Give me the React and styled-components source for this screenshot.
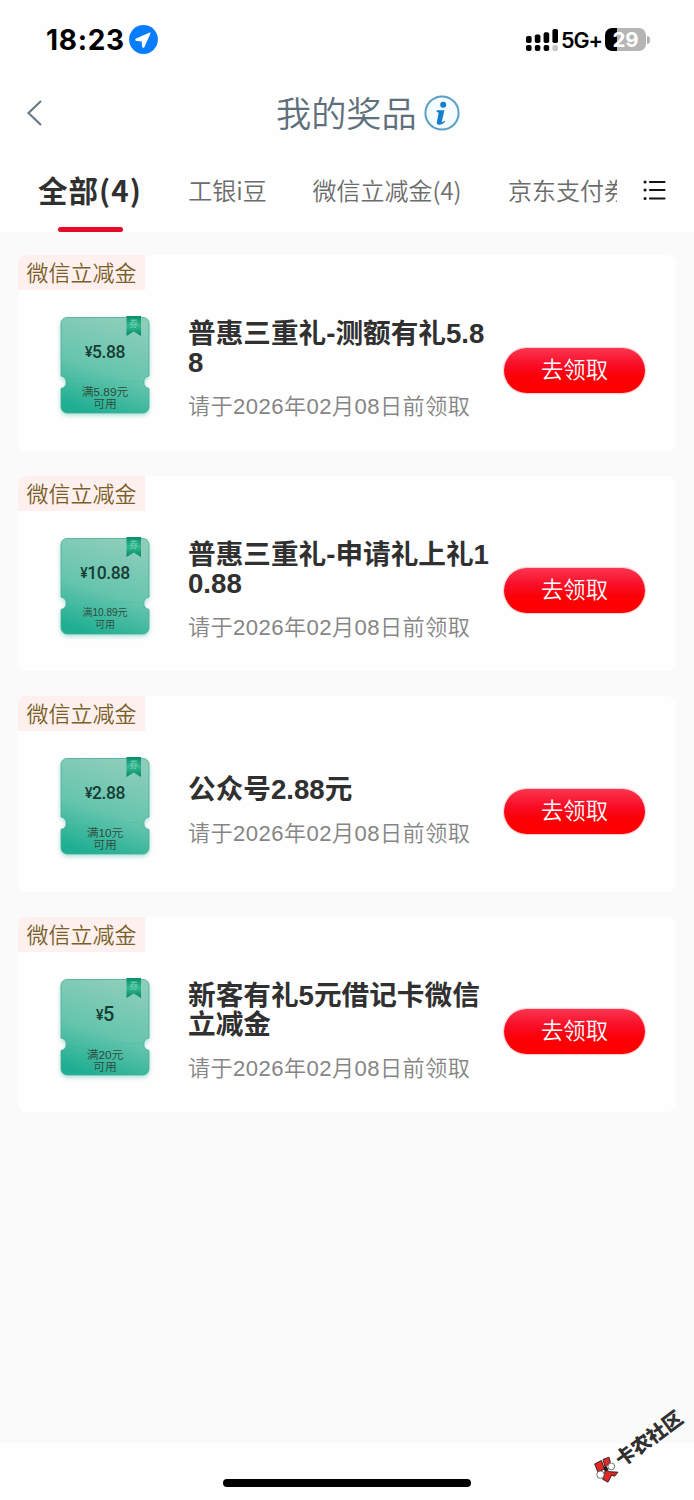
import React from 'react'
import styled, { createGlobalStyle } from 'styled-components'

const palette = {
  title: '#5d707b',
  text: '#303030',
  muted: '#858585',
  red: '#e60a26',
  page: '#fafafa',
}

const sans = "'Liberation Sans', 'Noto Sans CJK SC', sans-serif"
const cjk = "'Noto Sans CJK SC', sans-serif"

const GlobalStyle = createGlobalStyle`
  * {
    box-sizing: border-box;
  }
  body {
    margin: 0;
    background: #fff;
    font-family: ${sans};
  }
`

const Screen = styled.div`
  position: relative;
  width: 694px;
  height: 1500px;
  display: flex;
  flex-direction: column;
  overflow: hidden;
  background: #fefefe;
`

const StatusBar = styled.div`
  height: 79px;
  padding: 0 44px 0 46px;
  display: flex;
  align-items: center;
  justify-content: space-between;
  color: #000;
`

const StatusGroup = styled.div`
  display: flex;
  align-items: center;
`

const Clock = styled.span`
  width: 83px;
  font: 700 28px/40px Inter, sans-serif;
  letter-spacing: 0.7px;
  white-space: nowrap;
`

const Network = styled.span`
  width: 44px;
  margin-left: 3px;
  font: 600 21.5px/40px Inter, sans-serif;
  letter-spacing: -1.1px;
  white-space: nowrap;
`

const Battery = styled.div`
  width: 41px;
  height: 23px;
  border-radius: 7px;
  background: linear-gradient(90deg, #000 12px, #b5b5b5 12px);
  color: #fff;
  font: 700 20.5px/24px Inter, sans-serif;
  text-align: center;
`

const BatteryTip = styled.div`
  width: 3px;
  height: 8px;
  margin-left: 1px;
  border-radius: 0 3px 3px 0;
  background: #b5b5b5;
`

const Header = styled.header`
  height: 68px;
  padding: 0 26px;
  display: grid;
  grid-template-columns: 20px 1fr 20px;
  align-items: center;
`

const Heading = styled.div`
  display: flex;
  align-items: center;
  padding-left: 230px;
  color: ${palette.title};

  h1 {
    width: 141px;
    margin: -3px 0 0;
    font: 350 35.2px/50px ${cjk};
    white-space: nowrap;
  }
  svg {
    margin-left: 7px;
  }
`

const TabBar = styled.nav`
  height: 85px;
  display: flex;
  background: #fefefe;
`

const TabScroller = styled.div`
  width: 617px;
  padding-left: 38px;
  display: flex;
  overflow: hidden;
`

const Tab = styled.div`
  flex: none;
  display: flex;
  flex-direction: column;
  align-items: center;
  width: ${props => props.width}px;
  margin-right: ${props => props.gap}px;
  color: ${props => (props.active ? palette.text : '#6c6c6c')};
  font: ${props => (props.active ? '700 29.5px' : '350 24px')} / 40px ${cjk};
  letter-spacing: ${props => (props.active ? 1.1 : 0)}px;
  padding-top: ${props => (props.active ? 22 : 23)}px;
  white-space: nowrap;

  &::after {
    content: '';
    display: ${props => (props.active ? 'block' : 'none')};
    width: 65px;
    height: 5px;
    margin-top: 18px;
    border-radius: 3px;
    background: ${palette.red};
  }
`

const TabMenu = styled.div`
  padding: 33px 0 0 26px;
`

const List = styled.main`
  height: 1211px;
  padding: 23px 18px 0;
  display: flex;
  flex-direction: column;
  gap: 25px;
  background: ${palette.page};
`

const Card = styled.section`
  height: 195.5px;
  border-radius: 8px;
  background: #fefefe;
`

const Tag = styled.div`
  width: 127px;
  height: 35px;
  border-radius: 8px 0 0 0;
  background: #fff0f0;
  color: #796027;
  text-align: center;
  font: 350 22px/33px ${cjk};
`

const CardBody = styled.div`
  height: 148px;
  padding: 0 31px 0 36px;
  display: flex;
  align-items: center;
`

const Ticket = styled.div`
  position: relative;
  width: 102px;
  height: 112px;
  align-self: flex-start;
  margin-top: 21px;
`

const TicketFace = styled.div`
  position: absolute;
  top: 0;
  left: 0;
  width: 100%;
  text-align: center;
  color: #173d35;
  white-space: nowrap;
`

const Amount = styled.div`
  padding-top: 29px;
  font: 500 ${props => (props.large ? 20 : 17.5)}px/24px Roboto, sans-serif;
  letter-spacing: -0.4px;

  small {
    font-size: 14px;
    vertical-align: 1px;
  }
`

const Condition = styled.div`
  margin-top: 22px;
  font: 350 ${props => (props.small ? 10 : 11.8)}px/12px 'Liberation Sans', ${cjk};
  color: #2f4b3c;
`

const Info = styled.div`
  width: 348px;
  flex: none;
  margin-top: 14px;
  padding-left: 32px;
`

const Name = styled.h2`
  width: 306px;
  margin: 0;
  color: ${palette.text};
  font: 700 27.65px/29px ${sans};
  word-break: break-all;
`

const Deadline = styled.p`
  margin: 14px 0 0;
  color: ${palette.muted};
  font: 350 22.1px/32px ${sans};
  letter-spacing: 0.45px;
  white-space: nowrap;
`

const ClaimButton = styled.button`
  width: 141px;
  height: 45px;
  margin-top: 12px;
  padding: 0 0 4px;
  border: 0;
  border-radius: 23px;
  background: linear-gradient(#fb3550 0%, #f90d26 38%, #fb0005 65%, #ff0000 100%);
  box-shadow: 0 0 1px 1px #ffc8ca;
  color: #fff;
  font: 350 22.3px/41px ${cjk};
`

const HomeArea = styled.footer`
  flex: 1;
  display: flex;
  justify-content: center;
  padding-top: 36px;
`

const HomeIndicator = styled.div`
  width: 248px;
  height: 8px;
  border-radius: 4px;
  background: #000;
`

// community stamp lying over the bottom right corner
const Watermark = styled.div`
  position: absolute;
  left: 585px;
  top: 1431px;
  display: flex;
  align-items: center;
  transform: rotate(-36.5deg);
  color: #303030;
  font: 900 19.5px/30px ${cjk};
  white-space: nowrap;

  svg {
    transform: rotate(36.5deg);
  }
`

const prizes = [
  { name: '普惠三重礼-测额有礼5.88', amount: '5.88', limit: '5.89' },
  { name: '普惠三重礼-申请礼上礼10.88', amount: '10.88', limit: '10.89' },
  { name: '公众号2.88元', amount: '2.88', limit: '10' },
  { name: '新客有礼5元借记卡微信立减金', amount: '5', limit: '20' },
]

const LocationIcon = () => (
  <svg width="29" height="29" viewBox="0 0 29 29">
    <circle cx="14.5" cy="14.5" r="14.4" fill="#087cff" />
    <path d="M21 8 7.4 14.1c-.8.4-.6 1.1.2 1.2l5.6.5.5 5.8c.1.8.9.9 1.2.2L21 8Z" fill="#fff" stroke="#fff" strokeWidth="1.2" strokeLinejoin="round" />
  </svg>
)

const SignalIcon = () => (
  <svg width="32" height="24" viewBox="0 0 32 24">
    {[8, 6.5, 4.2, 1].map((y, i) => (
      <rect key={y} x={i * 8.8} y={y} width="5.6" height={15 - y} rx="1.8" />
    ))}
    {[0, 1, 2, 3].map(i => (
      <rect key={i} x={i * 8.8} y="17" width="5.6" height="6" rx="2" fill={i === 3 ? '#c5c5c5' : '#000'} />
    ))}
  </svg>
)

const BackIcon = () => (
  <svg width="17" height="28" viewBox="0 0 17 28" fill="none" stroke="#647b81" strokeWidth="2.1">
    <path d="M15 2 2.5 14 15 26" />
  </svg>
)

const InfoIcon = () => (
  <svg width="36" height="36" viewBox="0 0 36 36">
    <circle cx="18" cy="18" r="16.6" fill="#f4fcff" stroke="#5a9fc6" strokeWidth="2" />
    <circle cx="19.2" cy="9.7" r="3" fill="#147dcc" />
    <path d="M12.8 15.2h7.6l-2.6 11.2c-.2 1 .6 1 2.6-.6l.6 1c-2.2 2.3-4 3.3-6.1 3-2-.3-2.3-1.7-1.9-3.6l1.7-8.5-2.1-.9.2-1.6Z" fill="#147dcc" />
  </svg>
)

const MenuIcon = () => (
  <svg width="24" height="22" viewBox="0 0 24 22" fill="none" stroke="#151515" strokeWidth="2.2" strokeLinecap="round">
    <path d="M7 2h14.5M7 10h14.5M7 18.5h14.5" />
    <path d="M2 2h.1M2 10h.1M2 18.5h.1" strokeWidth="3" />
  </svg>
)

const TicketShape = ({ id }) => (
  <svg width="102" height="112" viewBox="0 0 102 112">
    <defs>
      <linearGradient id={`face${id}`} x1=".65" y1="0" x2=".35" y2="1">
        <stop offset="0" stopColor="#8dcdbb" />
        <stop offset=".55" stopColor="#66c5ad" />
        <stop offset="1" stopColor="#1fae92" />
      </linearGradient>
      <linearGradient id={`flag${id}`} x1="0" y1="0" x2="0" y2="1">
        <stop offset="0" stopColor="#078e68" />
        <stop offset=".5" stopColor="#35b891" />
        <stop offset="1" stopColor="#00885f" />
      </linearGradient>
    </defs>
    <path
      d="M13 6.5h76a6 6 0 0 1 6 6V65a6.3 6.3 0 0 0 0 12.4V96a6 6 0 0 1-6 6H13a6 6 0 0 1-6-6V77.4A6.3 6.3 0 0 0 7 65V12.5a6 6 0 0 1 6-6Z"
      fill={`url(#face${id})`}
      stroke="#4aa994"
      strokeWidth=".8"
      style={{ filter: 'drop-shadow(0 2px 2px #a7dfd5)' }}
    />
    <path d="M14 70.5h74" stroke="#52bfa7" strokeWidth=".7" />
    <path d="M72.5 5H87v20l-7.2-4.4-7.3 4.4V5Z" fill={`url(#flag${id})`} />
    <text x="79.8" y="16" textAnchor="middle" fontSize="9" fill="#79d5b6" fontFamily="Noto Sans CJK SC, sans-serif">券</text>
  </svg>
)

const StampLogo = () => (
  <svg width="27" height="28" viewBox="0 0 27 28">
    <g stroke="#241716" strokeWidth=".9" fill="#e12a28" strokeLinejoin="round">
      <path d="m2 8.7 6.7-3.4 3.3 8.4-6.7 3.3Z" />
      <path d="m10.3 4.3 6-2.3 1.4 5-5.2 5Z" />
      <path d="m12.5 15 4.5 1.5 8.3.5-3.3 4-3-1-3.7 7-5.3-3 2-5Z" />
    </g>
    <circle cx="18.7" cy="11.2" r="3.4" fill="#fff" stroke="#555" strokeWidth=".8" />
    <circle cx="7.8" cy="19.5" r="3.7" fill="#fff" stroke="#555" strokeWidth=".8" />
    <path d="m11 12 3-1 2 4-4 1Z" fill="#241716" />
  </svg>
)

const PrizeCard = ({ prize, id }) => (
  <Card>
    <Tag>微信立减金</Tag>
    <CardBody>
      <Ticket>
        <TicketShape id={id} />
        <TicketFace>
          <Amount large={prize.amount.length === 1 ? 1 : 0}>
            <small>¥</small>
            {prize.amount}
          </Amount>
          <Condition small={prize.limit.length > 4 ? 1 : 0}>
            满{prize.limit}元
            <br />
            可用
          </Condition>
        </TicketFace>
      </Ticket>
      <Info>
        <Name>{prize.name}</Name>
        <Deadline>请于2026年02月08日前领取</Deadline>
      </Info>
      <ClaimButton>去领取</ClaimButton>
    </CardBody>
  </Card>
)

const App = () => (
  <Screen>
    <GlobalStyle />
    <StatusBar>
      <StatusGroup>
        <Clock>18:23</Clock>
        <LocationIcon />
      </StatusGroup>
      <StatusGroup>
        <SignalIcon />
        <Network>5G+</Network>
        <Battery>29</Battery>
        <BatteryTip />
      </StatusGroup>
    </StatusBar>
    <Header>
      <BackIcon />
      <Heading>
        <h1>我的奖品</h1>
        <InfoIcon />
      </Heading>
    </Header>
    <TabBar>
      <TabScroller>
        <Tab active={1} width={104} gap={47}>全部(4)</Tab>
        <Tab width={77} gap={46}>工银i豆</Tab>
        <Tab width={150} gap={46}>微信立减金(4)</Tab>
        <Tab width={120} gap={0}>京东支付券</Tab>
      </TabScroller>
      <TabMenu>
        <MenuIcon />
      </TabMenu>
    </TabBar>
    <List>
      {prizes.map((prize, i) => (
        <PrizeCard key={prize.name} prize={prize} id={i} />
      ))}
    </List>
    <HomeArea>
      <HomeIndicator />
    </HomeArea>
    <Watermark>
      <StampLogo />
      卡农社区
    </Watermark>
  </Screen>
)

export default App
